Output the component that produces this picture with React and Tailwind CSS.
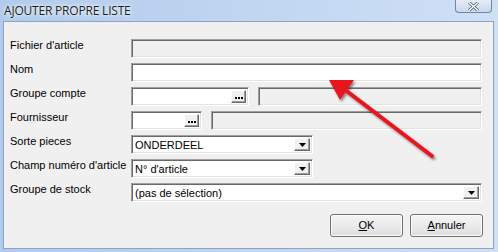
const font = { fontFamily: '"Liberation Sans", Tahoma, sans-serif' };

const sunken =
  'border border-t-[#a0a0a0] border-l-[#a0a0a0] border-b-[#ffffff] border-r-[#ffffff] shadow-[inset_1px_1px_0_#696969,inset_-1px_-1px_0_#e3e3e3]';

const raised =
  'border border-t-[#ffffff] border-l-[#ffffff] border-b-[#696969] border-r-[#696969] shadow-[inset_-1px_-1px_0_#a0a0a0] bg-[#f0f0f0]';

const Field = ({ width, disabled }) => (
  <div className={`h-[19px] ${width} ${sunken} ${disabled ? 'bg-[#f0f0f0]' : 'bg-white'}`} />
);

const Lookup = ({ width }) => (
  <div className={`h-[19px] ${width} ${sunken} bg-white flex justify-end items-stretch p-[2px]`}>
    <div className={`w-[15px] ${raised} flex items-end justify-center pb-[3px]`}>
      <div className="flex gap-[1px]">
        <span className="w-[2px] h-[2px] bg-black" />
        <span className="w-[2px] h-[2px] bg-black" />
        <span className="w-[2px] h-[2px] bg-black" />
      </div>
    </div>
  </div>
);

const Select = ({ width, value }) => (
  <div className={`h-[19px] ${width} ${sunken} bg-white flex items-stretch p-[2px]`}>
    <span className="flex-1 pl-[1px] text-[11px] leading-[15px] text-black whitespace-nowrap">{value}</span>
    <div className={`w-[16px] ${raised} flex items-center justify-center`}>
      <svg width="7" height="4" viewBox="0 0 7 4">
        <path d="M0 0h7L3.5 4z" fill="#000" />
      </svg>
    </div>
  </div>
);

const Row = ({ label, children }) => (
  <div className="flex items-start h-[19px]">
    <span className="w-[127px] shrink-0 pl-[6px] text-[11px] leading-[13px] text-black whitespace-nowrap">{label}</span>
    <div className="flex gap-[9px]">{children}</div>
  </div>
);

export default function App() {
  return (
    <div
      className="w-[498px] h-[252px] overflow-hidden relative bg-gradient-to-r from-[#b1cbec] via-[#c0d6f1] to-[#cfe0f5] flex flex-col"
      style={font}
    >
      <div className="h-[21px] flex items-center relative">
        <span
          className="pl-[4px] text-[12px] text-[#1e1e1e] tracking-[-0.2px]"
          style={{ fontFamily: '"Open Sans", "Liberation Sans", sans-serif', textShadow: '0 0 6px #ffffff, 0 0 3px #ffffff' }}
        >
          AJOUTER PROPRE LISTE
        </span>
        <div className="absolute right-[6px] top-0 w-[37px] h-[13px] border border-t-0 border-[#6f86a6] rounded-b-[4px] bg-gradient-to-b from-[#e4ecf7] to-[#c9d8ee] flex items-center justify-center">
          <svg width="11" height="9" viewBox="0 0 11 9">
            <path d="M1 0.5l9 8M10 0.5l-9 8" stroke="#4c5f7a" strokeWidth="3" />
            <path d="M1 0.5l9 8M10 0.5l-9 8" stroke="#ffffff" strokeWidth="1.4" />
          </svg>
        </div>
      </div>

      <div className="ml-[3px] w-[491px] h-[228px] border border-[#8ea3bf] bg-[#f0f0f0] relative">
        <div className="flex flex-col gap-[5px] pt-[17px]">
          <Row label="Fichier d'article">
            <Field width="w-[351px]" disabled />
          </Row>
          <Row label="Nom">
            <Field width="w-[351px]" />
          </Row>
          <Row label="Groupe compte">
            <Lookup width="w-[118px]" />
            <Field width="w-[224px]" disabled />
          </Row>
          <Row label="Fournisseur">
            <Lookup width="w-[71px]" />
            <Field width="w-[271px]" disabled />
          </Row>
          <Row label="Sorte pieces">
            <Select width="w-[182px]" value="ONDERDEEL" />
          </Row>
          <Row label="Champ numéro d'article">
            <Select width="w-[182px]" value="N° d'article" />
          </Row>
          <Row label="Groupe de stock">
            <Select width="w-[351px]" value="(pas de sélection)" />
          </Row>
        </div>

        <div className="flex justify-end gap-[7px] pr-[10px] mt-[12px]">
          <button className="w-[73px] h-[23px] rounded-[3px] border border-[#707070] bg-gradient-to-b from-[#f4f4f4] via-[#ebebeb] to-[#dddddd] text-[11px] text-black shadow-[inset_0_0_0_1px_#fcfcfc]">
            <span className="underline underline-offset-1">O</span>K
          </button>
          <button className="w-[73px] h-[23px] rounded-[3px] border border-[#707070] bg-gradient-to-b from-[#f4f4f4] via-[#ebebeb] to-[#dddddd] text-[11px] text-black shadow-[inset_0_0_0_1px_#fcfcfc]">
            <span className="underline underline-offset-1">A</span>nnuler
          </button>
        </div>

        <svg className="absolute left-0 top-0 pointer-events-none" width="491" height="228" viewBox="0 0 491 228">
          <defs>
            <filter id="sh" x="-20%" y="-20%" width="140%" height="140%">
              <feDropShadow dx="1.5" dy="2" stdDeviation="1.2" floodColor="#000" floodOpacity="0.45" />
            </filter>
          </defs>
          <g filter="url(#sh)">
            <path d="M428 134L340 67" stroke="#e8151b" strokeWidth="4" strokeLinecap="round" />
            <path d="M325 58L350 58L336 78z" fill="#e8151b" />
          </g>
        </svg>
      </div>
    </div>
  );
}
